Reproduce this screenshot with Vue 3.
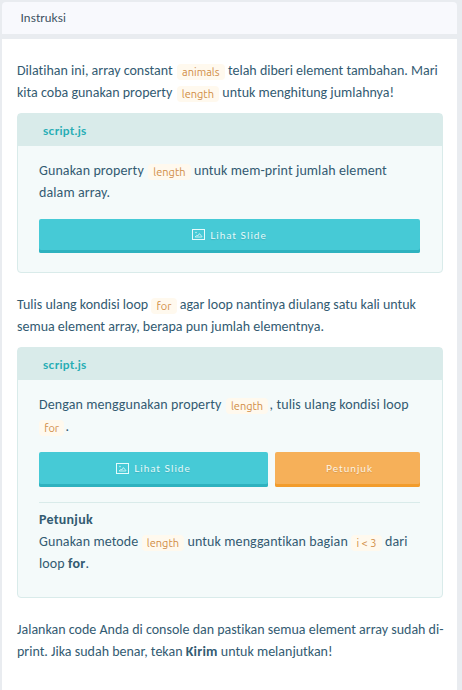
<script setup>
const file = 'script.js'
</script>

<template>
  <main class="panel">
    <header class="top">Instruksi</header>
    <section class="content">
      <p class="text">
        Dilatihan ini, array constant <code>animals</code> telah diberi element tambahan. Mari<br>
        kita coba gunakan property <code>length</code> untuk menghitung jumlahnya!
      </p>

      <article class="card first">
        <h2>{{ file }}</h2>
        <div class="body">
          <p class="text">
            Gunakan property <code>length</code> untuk mem-print jumlah element<br>
            dalam array.
          </p>
          <div class="actions">
            <button class="btn slide">
              <svg width="13" height="11" viewBox="0 0 13 11" fill="none" stroke="currentColor"><rect x=".5" y=".5" width="12" height="10" /><path d="M3.2 8 4.8 6.3 5.9 6.9 7.4 4.6 9.8 7.4V8Z" stroke-width=".8" /><circle cx="4" cy="3.5" r=".5" stroke-width=".6" /></svg>
              <span>Lihat Slide</span>
            </button>
          </div>
        </div>
      </article>

      <p class="text">
        Tulis ulang kondisi loop <code class="lead">for</code> agar loop nantinya diulang satu kali untuk<br>
        semua element array, berapa pun jumlah elementnya.
      </p>

      <article class="card second">
        <h2>{{ file }}</h2>
        <div class="body">
          <p class="text">
            Dengan menggunakan property <code class="tight">length</code> , tulis ulang kondisi loop<br>
            <code class="lead tight">for</code> .
          </p>
          <div class="actions">
            <button class="btn slide">
              <svg width="13" height="11" viewBox="0 0 13 11" fill="none" stroke="currentColor"><rect x=".5" y=".5" width="12" height="10" /><path d="M3.2 8 4.8 6.3 5.9 6.9 7.4 4.6 9.8 7.4V8Z" stroke-width=".8" /><circle cx="4" cy="3.5" r=".5" stroke-width=".6" /></svg>
              <span>Lihat Slide</span>
            </button>
            <button class="btn hint-btn"><span>Petunjuk</span></button>
          </div>
          <div class="hint">
            <p class="text">
              <b>Petunjuk</b><br>
              Gunakan metode <code>length</code> untuk menggantikan bagian <code>i &lt; 3</code> dari<br>
              loop <b>for</b>.
            </p>
          </div>
        </div>
      </article>

      <p class="text">
        Jalankan code Anda di console dan pastikan semua element array sudah di-<br>
        print. Jika sudah benar, tekan <b>Kirim</b> untuk melanjutkan!
      </p>
    </section>
  </main>
</template>

<style>
body { background: #e9ecf0; overflow: hidden; }
</style>

<style scoped>
* { box-sizing: border-box; }
.panel {
  height: 690px;
  padding: 2px 5px 0 2px;
  display: flex;
  flex-direction: column;
  gap: 5px;
  overflow: hidden;
  background: #e9ecf0;
  font-family: Carlito, Lato, sans-serif;
  font-variant-ligatures: none;
  color: #335b72;
}
.top {
  flex: none;
  height: 32px;
  padding-left: 18.5px;
  border-radius: 4px 4px 0 0;
  background: #f8f9fd;
  color: #3b4f60;
  font-family: Lato, sans-serif;
  font-size: 12px;
  line-height: 32px;
  letter-spacing: 0.1px;
}
.content {
  flex: 1;
  padding: 21px 14px 0 15px;
  background: #fff;
}
.text {
  margin: 0;
  font-size: 14px;
  line-height: 22px;
  letter-spacing: 0;
  white-space: nowrap;
}
.body .text { letter-spacing: 0.1px; }
.body .text b { letter-spacing: 0.26px; }
.text b { letter-spacing: 0.2px; }
code {
  margin-left: 1px;
  padding: 2px 5.25px;
  border-radius: 4px;
  background: #fff9ee;
  color: #d18e48;
  font-family: Ubuntu, "Noto Sans", sans-serif;
  font-size: 11px;
  line-height: 0;
  letter-spacing: 0;
  vertical-align: -1px;
}
.body code { letter-spacing: 0; }
.lead { margin-left: 0; }
.tight { margin-right: -2px; }
.hint code { margin-left: 0; }
.card {
  margin: 9px 0 21px;
  border: 1px solid #d9ebea;
  border-radius: 4px;
  background: #f4fafa;
}
.first { height: 160px; }
.second { height: 251px; }
.card h2 {
  margin: 0;
  height: 32px;
  padding: 1px 0 0 25px;
  background: #d9ebea;
  color: #27adb5;
  font-family: Lato, sans-serif;
  font-size: 12px;
  line-height: 32px;
  letter-spacing: 0.3px;
}
.body { padding: 14px 22px 0 21px; }
.actions {
  display: flex;
  gap: 7px;
  margin-top: 15px;
}
.second .actions { margin-top: 14px; }
.btn {
  display: flex;
  align-items: center;
  justify-content: center;
  gap: 5px;
  height: 34px;
  padding: 0 0 3px;
  border: 0;
  border-radius: 2px;
  color: #e6fbfc;
  font: 10px Lato, sans-serif;
  letter-spacing: 1.05px;
  text-shadow: 0 1px 1px rgba(0, 0, 0, .13);
}
.second .btn { height: 35px; }
.slide { flex: 1; background: #46cad6; box-shadow: inset 0 -3px #2eb2bf; }
.hint-btn { width: 145px; padding-left: 4px; background: #f6b059; color: #fff4e4; box-shadow: inset 0 -3px #f29c2c; }
.hint {
  margin-top: 15px;
  padding-top: 6px;
  border-top: 1px solid #d9ebea;
}
</style>
